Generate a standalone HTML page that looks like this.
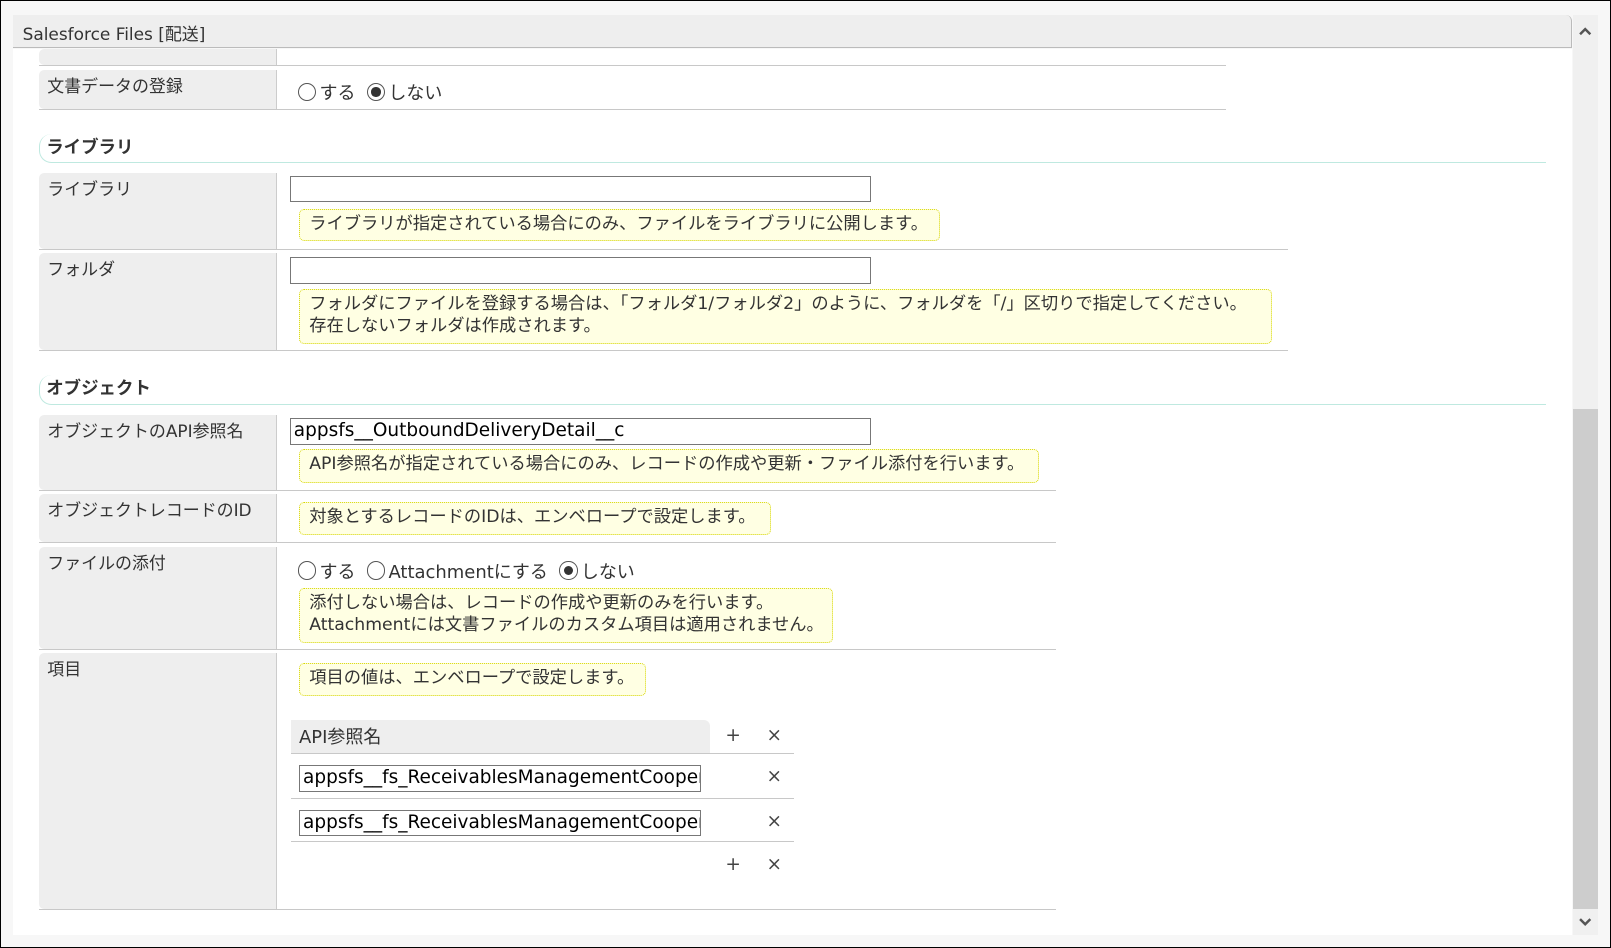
<!DOCTYPE html>
<html><head><meta charset="utf-8"><style>
html{zoom:1.02742}
body{margin:0;width:1568px;height:923px;overflow:hidden;font-family:"DejaVu Sans","Noto Sans CJK JP",sans-serif;font-size:17px;color:#333;position:relative;background:#fff}
.frame{position:absolute;left:0;top:0;width:1566px;height:921px;border:1px solid #000;background:#f7f7f7}
.hdr{position:absolute;left:13px;top:15px;width:1517px;height:32px;background:#eee;border-bottom:1px solid #bbb;border-right:1px solid #bbb;border-top-right-radius:6px;box-sizing:border-box;padding:4px 9px;font-size:16.5px}
.content{position:absolute;left:13px;top:48px;width:1517px;height:862px;background:#fff;overflow:hidden}
.sb{position:absolute;left:1531px;top:15px;width:24px;height:895px;background:#f0f0f0}
.thumb{position:absolute;left:1531px;top:398px;width:24px;height:487px;background:#cdcdcd}
.row{position:absolute;left:38px;border-bottom:1px solid #c8c8c8}
.lab{position:absolute;left:0;top:0;bottom:0;width:232px;background:#eee;border-right:1px solid #ccc;border-top-left-radius:5px;border-bottom-left-radius:5px;padding:2px 8px;box-sizing:border-box;font-size:16.5px;white-space:nowrap}
.sec{position:absolute;left:38px;width:1467px;height:29px;border-left:1px solid #bfe9e0;border-bottom:1px solid #bfe9e0;border-radius:12px 0 0 12px;font-weight:bold;padding:0 6px;box-sizing:border-box;font-size:17px}
.inp{position:absolute;left:282px;width:566px;height:26px;border:1px solid #777;box-sizing:border-box;padding:0 3px;font-size:18px;line-height:24px;color:#000;white-space:nowrap;overflow:hidden}
.note{position:absolute;left:291px;background:#ffffe3;border:1px dotted #d6d600;border-radius:5px;padding:3px 9px;box-sizing:border-box;font-size:16.8px;line-height:22px;white-space:nowrap}
.rad{position:absolute;font-size:17.5px;white-space:nowrap}
.r{display:inline-block;width:18px;height:18px;border:1px solid #555;border-radius:50%;box-sizing:border-box;vertical-align:-2px;margin-right:3px;position:relative}
.r.on::after{content:"";position:absolute;left:3.5px;top:3.5px;width:9px;height:9px;border-radius:50%;background:#333}
.ic{position:absolute;font-size:18px;color:#444}
.hl{position:absolute;left:283px;width:490px;border-bottom:1px solid #c8c8c8}
</style></head><body>
<div class="frame"></div>
<div class="content"></div>
<div class="hdr">Salesforce Files [配送]</div>
<div class="sb"></div><div class="thumb"></div>
<svg style="position:absolute;left:1536px;top:24px" width="14" height="12"><path d="M2 9 L7 4 L12 9" fill="none" stroke="#555" stroke-width="2.4"/></svg>
<svg style="position:absolute;left:1536px;top:892px" width="14" height="12"><path d="M2 3 L7 8 L12 3" fill="none" stroke="#555" stroke-width="2.4"/></svg>

<div class="row" style="top:48px;height:15px;width:1155px"><div class="lab"></div></div>
<div class="row" style="top:68px;height:38px;width:1155px"><div class="lab">文書データの登録</div></div>
<div class="rad" style="left:290px;top:77px"><span class="r"></span>する&nbsp; <span class="r on"></span>しない</div>

<div class="sec" style="top:130px">ライブラリ</div>
<div class="row" style="top:168px;height:74px;width:1216px"><div class="lab">ライブラリ</div></div>
<div class="inp" style="top:171px"></div>
<div class="note" style="top:203px;width:624px;height:32px">ライブラリが指定されている場合にのみ、ファイルをライブラリに公開します。</div>
<div class="row" style="top:246px;height:95px;width:1216px"><div class="lab">フォルダ</div></div>
<div class="inp" style="top:250px"></div>
<div class="note" style="top:281px;width:947px;height:54px">フォルダにファイルを登録する場合は、「フォルダ1/フォルダ2」のように、フォルダを「/」区切りで指定してください。<br>存在しないフォルダは作成されます。</div>

<div class="sec" style="top:365px">オブジェクト</div>
<div class="row" style="top:404px;height:73px;width:990px"><div class="lab">オブジェクトのAPI参照名</div></div>
<div class="inp" style="top:407px">appsfs__OutboundDeliveryDetail__c</div>
<div class="note" style="top:437px;width:720px;height:33px">API参照名が指定されている場合にのみ、レコードの作成や更新・ファイル添付を行います。</div>
<div class="row" style="top:481px;height:47px;width:990px"><div class="lab">オブジェクトレコードのID</div></div>
<div class="note" style="top:489px;width:459px;height:32px">対象とするレコードのIDは、エンベロープで設定します。</div>
<div class="row" style="top:532px;height:100px;width:990px"><div class="lab">ファイルの添付</div></div>
<div class="rad" style="left:290px;top:543px"><span class="r"></span>する&nbsp; <span class="r"></span>Attachmentにする&nbsp; <span class="r on"></span>しない</div>
<div class="note" style="top:572px;width:520px;height:54px">添付しない場合は、レコードの作成や更新のみを行います。<br>Attachmentには文書ファイルのカスタム項目は適用されません。</div>
<div class="row" style="top:636px;height:249px;width:990px"><div class="lab">項目</div></div>
<div class="note" style="top:645px;width:338px;height:32px">項目の値は、エンベロープで設定します。</div>
<div style="position:absolute;left:283px;top:701px;width:408px;height:32px;background:#eee;border-top-right-radius:6px;padding:3px 8px;box-sizing:border-box;font-size:17.5px">API参照名</div>
<div class="hl" style="top:733px"></div>
<div class="ic" style="left:706px;top:706px">+</div><div class="ic" style="left:746px;top:706px">×</div>
<div class="inp" style="top:745px;left:291px;width:391px">appsfs__fs_ReceivablesManagementCooperation</div>
<div class="ic" style="left:746px;top:746px">×</div>
<div class="hl" style="top:777px"></div>
<div class="inp" style="top:788px;left:291px;width:391px">appsfs__fs_ReceivablesManagementCooperation</div>
<div class="ic" style="left:746px;top:789px">×</div>
<div class="hl" style="top:819px"></div>
<div class="ic" style="left:706px;top:831px">+</div><div class="ic" style="left:746px;top:831px">×</div>
</body></html>
